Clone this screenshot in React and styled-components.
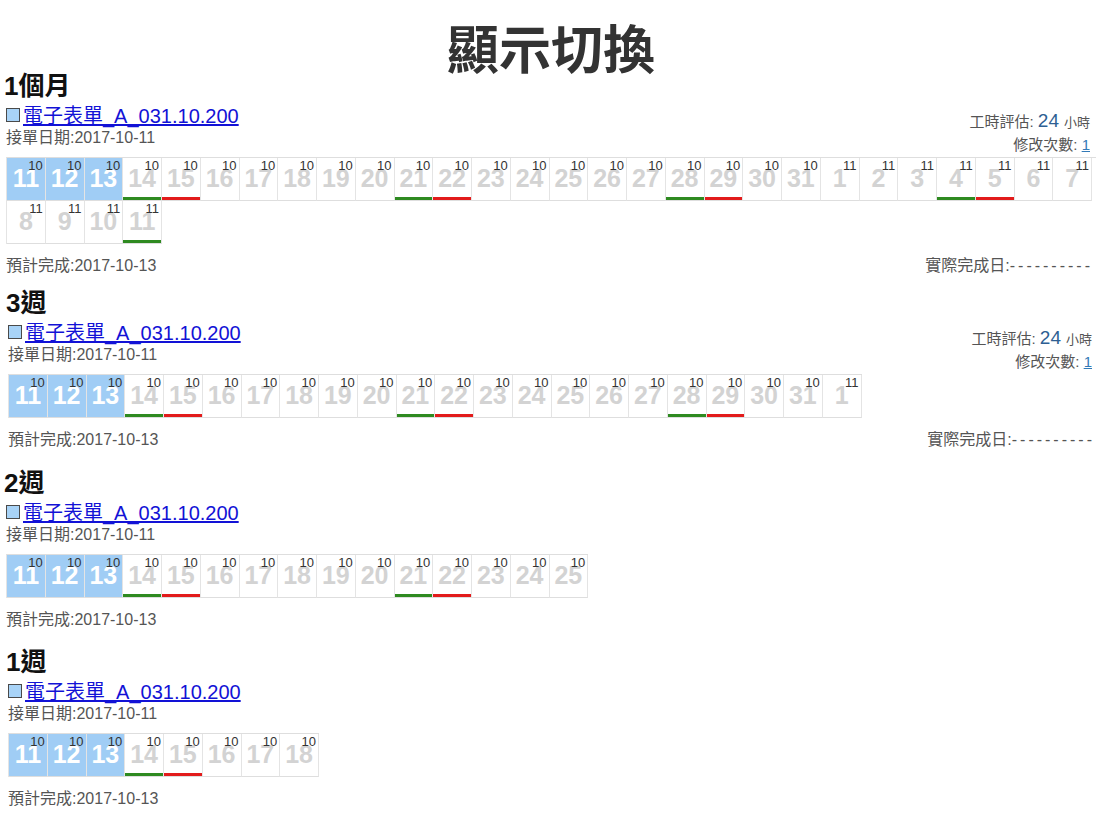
import React from "react";
import styled, { createGlobalStyle } from "styled-components";

const GlobalStyle = createGlobalStyle`
  html, body { margin: 0; padding: 0; background: #fff; }
  body {
    font-family: "Liberation Sans", "Noto Sans CJK TC", sans-serif;
    color: #333;
  }
`;

const Page = styled.div`
  padding: 0 4px 0 6px;
`;

const Title = styled.h1`
  margin: 22px 0 0;
  text-align: center;
  font-family: "Noto Sans CJK TC", sans-serif;
  font-size: 52px;
  line-height: 50px;
  font-weight: 700;
  color: #333;
`;

const Section = styled.section`
  margin-top: ${(p) => p.$gap}px;
  margin-left: ${(p) => p.$shift}px;
  margin-right: ${(p) => -p.$shift}px;
`;

const Heading = styled.h3`
  margin: 0 0 0 -2px;
  font-family: "Liberation Sans", "Noto Sans CJK TC", sans-serif;
  font-size: 26px;
  line-height: 28px;
  font-weight: 700;
  color: #111;
`;

const Header = styled.div`
  display: flex;
  justify-content: space-between;
  align-items: flex-start;
  height: 48px;
  padding-right: 6px;
`;

const LeftInfo = styled.div`
  display: flex;
  flex-direction: column;
`;

const LinkRow = styled.div`
  display: flex;
  align-items: center;
  height: 28px;
`;

const Box = styled.span`
  display: inline-block;
  width: 12px;
  height: 12px;
  background: #a8d3f7;
  border: 1px solid #4a4a4a;
  margin: 1px 3px 0 0;
`;

const FormLink = styled.a`
  font-size: 20px;
  color: #1212d6;
  text-decoration: underline;
  cursor: pointer;
`;

const InfoText = styled.div`
  font-size: 16px;
  line-height: 20px;
  color: #555;
`;

const RightInfo = styled.div`
  padding-top: 10px;
  text-align: right;
  font-size: 15px;
  line-height: 22px;
  color: #555;
  white-space: nowrap;
`;

const Hours = styled.span`
  font-size: 19px;
  color: #2e5f93;
`;

const Unit = styled.span`
  font-size: 13px;
  margin-left: 5px;
`;

const CountLink = styled.a`
  color: #337ab7;
  text-decoration: underline;
`;

const Days = styled.div`
  display: flex;
  flex-wrap: wrap;
  width: fit-content;
  margin-top: 9px;
  border-top: 1px solid #dedede;
  border-left: 1px solid #e4e4e4;
`;

const Day = styled.div`
  position: relative;
  box-sizing: border-box;
  width: 38.75px;
  height: 43px;
  border-right: 1px solid #e4e4e4;
  border-bottom: 1px solid #dedede;
  background: ${(p) => (p.$active ? "#a0cdf5" : "#fff")};
  text-align: center;
`;

const DayNum = styled.span`
  display: block;
  font-size: 25px;
  line-height: 40px;
  font-weight: 700;
  color: ${(p) => (p.$active ? "#fff" : "#d3d3d3")};
`;

const Month = styled.sup`
  position: absolute;
  top: 1px;
  right: 2px;
  font-size: 13px;
  line-height: 13px;
  color: #333;
`;

const Bar = styled.span`
  position: absolute;
  left: 0;
  right: 0;
  bottom: 0;
  height: 3px;
  background: ${(p) => (p.$kind === "sat" ? "#2e8a20" : "#e21b1b")};
`;

const Footer = styled.div`
  display: flex;
  justify-content: space-between;
  margin-top: 12px;
  padding-right: 6px;
  font-size: 16px;
  line-height: 20px;
  color: #555;
  white-space: nowrap;
`;

const Dashes = styled.span`
  letter-spacing: 3px;
  margin-right: -3px;
  white-space: nowrap;
`;

function makeDays(n) {
  const out = [];
  const start = Date.UTC(2017, 9, 11);
  for (let i = 0; i < n; i++) {
    const dt = new Date(start + i * 86400000);
    out.push({
      m: dt.getUTCMonth() + 1,
      d: dt.getUTCDate(),
      dow: dt.getUTCDay(),
      active: i < 3,
    });
  }
  return out;
}

const sections = [
  { title: "1個月", n: 32, extra: true, gap: 0, shift: 0 },
  { title: "3週", n: 22, extra: true, gap: 13, shift: 2 },
  { title: "2週", n: 15, extra: false, gap: 19, shift: 0 },
  { title: "1週", n: 8, extra: false, gap: 18, shift: 2 },
];

function Schedule({ s }) {
  const days = makeDays(s.n);
  return (
    <Section $gap={s.gap} $shift={s.shift}>
      <Heading>{s.title}</Heading>
      <Header>
        <LeftInfo>
          <LinkRow>
            <Box />
            <FormLink>電子表單_A_031.10.200</FormLink>
          </LinkRow>
          <InfoText>接單日期:2017-10-11</InfoText>
        </LeftInfo>
        {s.extra && (
          <RightInfo>
            <div>
              工時評估: <Hours>24</Hours><Unit>小時</Unit>
            </div>
            <div>
              修改次數: <CountLink>1</CountLink>
            </div>
          </RightInfo>
        )}
      </Header>
      <Days>
        {days.map((d, i) => (
          <Day key={i} $active={d.active}>
            <DayNum $active={d.active}>{d.d}</DayNum>
            <Month>{d.m}</Month>
            {d.dow === 6 && <Bar $kind="sat" />}
            {d.dow === 0 && <Bar $kind="sun" />}
          </Day>
        ))}
      </Days>
      <Footer>
        <span>預計完成:2017-10-13</span>
        {s.extra && (
          <span>
            實際完成日:<Dashes>----------</Dashes>
          </span>
        )}
      </Footer>
    </Section>
  );
}

export default function App() {
  return (
    <>
      <GlobalStyle />
      <Page>
        <Title>顯示切換</Title>
        {sections.map((s) => (
          <Schedule key={s.title} s={s} />
        ))}
      </Page>
    </>
  );
}
